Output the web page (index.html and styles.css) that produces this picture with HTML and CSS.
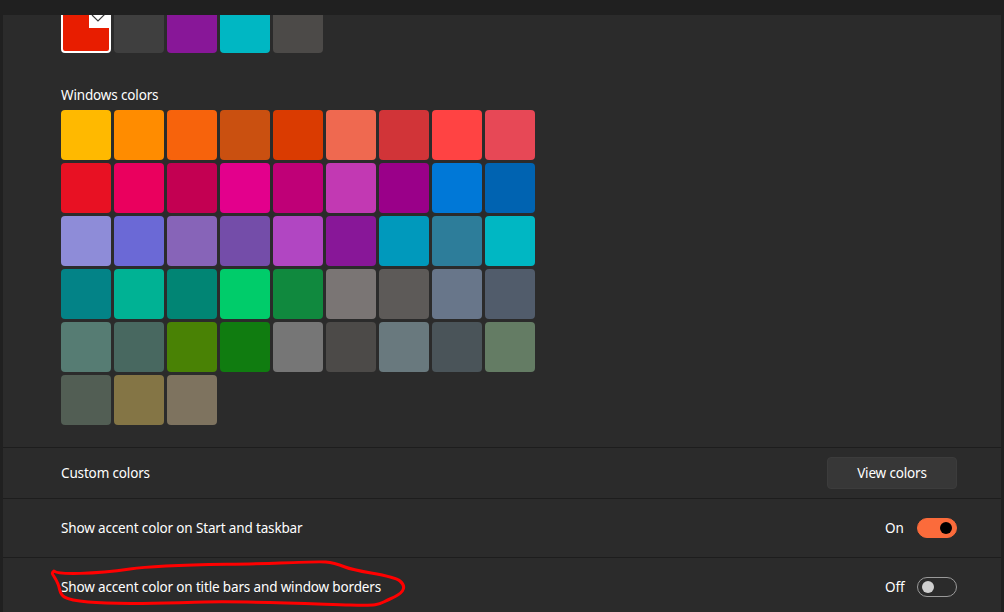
FILE: index.html
```html
<!DOCTYPE html>
<html lang="en">

<head>
    <meta charset="UTF-8">
    <meta name="viewport" content="width=device-width, initial-scale=1.0">
    <title>Colors</title>
    <link rel="stylesheet" href="styles.css">
</head>

<body>
    <div class="topbar"></div>
    <main class="panel">
        <section class="colors">
            <div class="swatches recent" id="recent"></div>
            <div class="label">Windows colors</div>
            <div class="swatches grid" id="grid"></div>
        </section>
        <div class="row row-short">
            <span>Custom colors</span>
            <button class="btn">View colors</button>
        </div>
        <div class="row">
            <span>Show accent color on Start and taskbar</span>
            <div class="switch">
                <span class="switch-label">On</span>
                <span class="toggle on"><span class="knob"></span></span>
            </div>
        </div>
        <div class="row">
            <span>Show accent color on title bars and window borders</span>
            <div class="switch">
                <span class="switch-label">Off</span>
                <span class="toggle"><span class="knob"></span></span>
            </div>
        </div>
    </main>

    <!-- red marker scribble on top of the screenshot -->
    <svg class="scribble" width="1004" height="612" viewBox="0 0 1004 612">
        <path d="M54 571 C 58 575, 95 574, 130 569 S 230 565, 280 563 S 330 561, 345 567 S 392 574, 400 581 S 402 594, 390 599 S 384 606, 350 605 S 250 601, 205 602 S 120 605, 88 602 S 62 594, 58 584 S 50 574, 54 571 Z"
            fill="none" stroke="#ff0000" stroke-width="3" stroke-linejoin="round" />
    </svg>

    <script>
        var recent = ["#e81d00", "#3f3f3f", "#881798", "#00b7c3", "#4c4a48"];
        var colors = [
            "#ffb900", "#ff8c00", "#f7630c", "#ca5010", "#da3b01", "#ef6950", "#d13438", "#ff4343", "#e74856",
            "#e81123", "#ea005e", "#c30052", "#e3008c", "#bf0077", "#c239b3", "#9a0089", "#0078d7", "#0063b1",
            "#8e8cd8", "#6b69d6", "#8764b8", "#744da9", "#b146c2", "#881798", "#0099bc", "#2d7d9a", "#00b7c3",
            "#038387", "#00b294", "#018574", "#00cc6a", "#10893e", "#7a7574", "#5d5a58", "#68768a", "#515c6b",
            "#567c73", "#486860", "#498205", "#107c10", "#767676", "#4c4a48", "#69797e", "#4a5459", "#647c64",
            "#525e54", "#847545", "#7e735f"
        ];

        function fill(id, list) {
            var box = document.getElementById(id);
            list.forEach(function (c) {
                var sw = document.createElement("div");
                sw.className = "swatch";
                sw.style.backgroundColor = c;
                box.appendChild(sw);
            });
            return box;
        }

        var first = fill("recent", recent).firstChild;
        first.classList.add("selected");
        first.innerHTML = '<span class="badge"><svg width="22" height="25" viewBox="0 0 22 25">' +
            '<polyline points="3,12 9,18 18,9" fill="none" stroke="#3a3a3a" stroke-width="1.2"/></svg></span>';
        fill("grid", colors);
    </script>
</body>

</html>
```

FILE: styles.css
```css
html,
body {
    height: 100%;
}

body {
    margin: 0;
    background-color: #202020;
    color: #ffffff;
    font-family: "Segoe UI", "Noto Sans", sans-serif;
    font-size: 13.5px;
    letter-spacing: -0.15px;
    overflow: hidden;
}

.topbar {
    height: 15px;
}

.panel {
    margin: 0 3px;
    height: calc(100% - 15px);
    background-color: #2b2b2b;
    overflow: hidden;
}

.colors {
    padding: 0 58px 22px;
}

.swatches {
    display: flex;
    gap: 3px;
}

.recent {
    margin-top: -12px;
}

.grid {
    display: grid;
    grid-template-columns: repeat(9, 50px);
}

.swatch {
    width: 50px;
    height: 50px;
    border-radius: 4px;
    box-sizing: border-box;
}

.swatch.selected {
    position: relative;
    border: 2px solid #ffffff;
}

.badge {
    position: absolute;
    top: -2px;
    right: -2px;
    width: 22px;
    height: 25px;
    background-color: #ffffff;
    border-radius: 0 4px 0 0;
}

.badge svg {
    display: block;
}

.label {
    margin: 32px 0 5px;
    line-height: 20px;
}

.row {
    display: flex;
    align-items: center;
    justify-content: space-between;
    height: 58px;
    padding: 0 44px 0 58px;
    border-top: 1px solid #1d1d1d;
}

.row-short {
    height: 50px;
}

.btn {
    width: 130px;
    height: 32px;
    background-color: #373737;
    border: 1px solid #3c3c3c;
    border-radius: 4px;
    color: #ffffff;
    font-family: inherit;
    font-size: 13.5px;
    letter-spacing: -0.15px;
}

.switch {
    display: flex;
    align-items: center;
}

.switch-label {
    min-width: 20px;
    margin-right: 12px;
}

.toggle {
    display: flex;
    align-items: center;
    width: 40px;
    height: 20px;
    padding: 0 4px;
    box-sizing: border-box;
    border: 1px solid #9a9a9a;
    border-radius: 10px;
}

.toggle .knob {
    width: 12px;
    height: 12px;
    border-radius: 50%;
    background-color: #cfcfcf;
}

.toggle.on {
    justify-content: flex-end;
    background-color: #fb6b3b;
    border-color: #fb6b3b;
}

.toggle.on .knob {
    background-color: #000000;
}

.scribble {
    position: absolute;
    top: 0;
    left: 0;
    pointer-events: none;
}
```
